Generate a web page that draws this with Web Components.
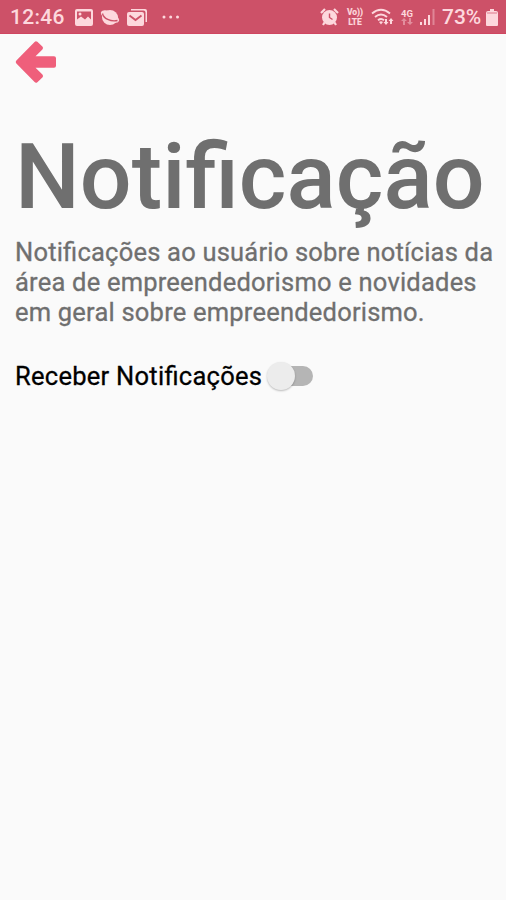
<!DOCTYPE html>
<html lang="pt-BR">
<head>
  <meta charset="utf-8">
  <title>Notificação</title>
  <style>
    body {
      margin: 0;
      background: #fafafa;
      font-family: Roboto, "Liberation Sans", sans-serif;
    }
  </style>
</head>
<body>
  <notification-page></notification-page>

  <script>
    class StatusBar extends HTMLElement {
      constructor() {
        super();
        this.attachShadow({ mode: 'open' });
      }

      connectedCallback() {
        this.render();
      }

      render() {
        this.shadowRoot.innerHTML = `
          <style>
            :host {
              --ink: #fdd8dd;
              --bar: #cd5168;
              display: flex;
              align-items: center;
              box-sizing: border-box;
              height: 34px;
              padding: 1px 8px 0 10px;
              background: var(--bar);
              border-bottom: 1px solid #cf4660;
              color: var(--ink);
              font-size: 21px;
              font-weight: 500;
              line-height: 32px;
            }

            svg {
              display: block;
              flex: none;
              fill: var(--ink);
            }

            .line {
              fill: none;
              stroke: var(--ink);
            }

            .cut {
              fill: none;
              stroke: var(--bar);
            }

            .time {
              width: 65px;
              letter-spacing: 0.3px;
            }

            .left {
              display: flex;
              align-items: center;
              gap: 7px;
              flex: 1;
            }

            .more {
              margin-left: 7px;
            }

            .right {
              display: flex;
              align-items: center;
            }

            .tiny {
              font-size: 9.5px;
              line-height: 9px;
              font-weight: 700;
              text-align: center;
            }

            .volte {
              display: flex;
              flex-direction: column;
              width: 18px;
              margin-left: 7px;
              font-size: 8.5px;
              line-height: 10px;
              -webkit-text-stroke: 0.2px;
            }

            .net {
              width: 16px;
              margin-left: 5px;
            }

            .battery {
              width: 40px;
              margin-left: 7px;
              white-space: nowrap;
            }
          </style>
          <div class="time">12:46</div>
          <div class="left">
            <svg width="18" height="17" viewBox="0 0 18 17">
              <path fill-rule="evenodd" d="M2 0h14q2 0 2 2v13q0 2-2 2H2q-2 0-2-2V2q0-2 2-2zM2 2.5v8l4-3 4 3 3-3 3 3v-8zM5 3.500a1.500 1.500 0 1 1 0 3a1.500 1.500 0 0 1 0-3z"/>
            </svg>
            <svg width="20" height="17" viewBox="0 0 20 17">
              <ellipse cx="10" cy="8.5" rx="8" ry="7.5"/>
              <ellipse cx="10" cy="7.5" rx="10" ry="4.6" transform="rotate(28 10 7.5)"/>
              <path class="cut" d="M2.5 4.500c1 5 8 8.500 15 7" stroke-width="1.3"/>
            </svg>
            <svg width="20" height="17" viewBox="0 0 20 17">
              <path d="M4 0h14q2 0 2 2v11h-1.5V3.5q0-2-2-2H4z"/>
              <path d="M2 3h13q2 0 2 2v10q0 2-2 2H2q-2 0-2-2V5q0-2 2-2z"/>
              <path class="cut" d="M2.5 6.5l6 4.5 6-4.5" stroke-width="1.8"/>
            </svg>
            <svg class="more" width="20" height="4" viewBox="0 0 20 4">
              <circle cx="3" cy="2" r="1.5"/><circle cx="9.7" cy="2" r="1.5"/><circle cx="16.5" cy="2" r="1.5"/>
            </svg>
          </div>
          <div class="right">
            <svg width="19" height="18" viewBox="0 0 19 18">
              <circle cx="9.5" cy="9.5" r="7.5"/>
              <path class="line" d="M1 5l4-4M18 5l-4-4M4.5 14.5L3 17M14.5 14.5L16 17" stroke-width="2.2"/>
              <path class="cut" d="M9.5 5.5v4l3 2" stroke-width="1.4"/>
            </svg>
            <div class="tiny volte"><span>Vo))</span><span>LTE</span></div>
            <svg style="margin-left: 7px" width="23" height="18" viewBox="0 0 23 18">
              <path class="line" d="M1 5.5q9-7.500 18 0M4 9q6-5 12 0M7 12.3q3.2-2.500 6 0" stroke-width="1.9"/>
              <path d="M8 14q2-1.500 4 0l-2 2.500z"/>
              <path d="M14 11h2v3h1.5L15 17l-2.500-3H14zM19 16h2v-3h1.5L20 10l-2.500 3H19z"/>
            </svg>
            <div class="tiny net">4G
              <svg width="16" height="7" viewBox="0 0 16 7" opacity=".45">
                <path d="M4 7V3H2l3-3 3 3H6v4zM10 0h2v4h2l-3 3-3-3h2z"/>
              </svg>
            </div>
            <svg style="margin-left: 5px" width="15" height="16" viewBox="0 0 15 16">
              <path d="M0 13h2v3H0zM4 10h2v6H4zM8 6h2v10H8z"/>
              <path d="M12.5 0h2v16h-2z" opacity=".4"/>
            </svg>
            <div class="battery">73%</div>
            <svg style="margin-left: 4px" width="12" height="17" viewBox="0 0 12 17">
              <path d="M4 0h4v2h2q2 0 2 2v12q0 1-1 1H1q-1 0-1-1V4q0-2 2-2h2z"/>
              <path d="M1 3h10v2H1z" fill="#cd5168" opacity=".35"/>
            </svg>
          </div>
        `;
      }
    }

    class BackButton extends HTMLElement {
      constructor() {
        super();
        this.attachShadow({ mode: 'open' });
      }

      connectedCallback() {
        this.shadowRoot.innerHTML = `
          <style>
            :host {
              display: block;
              width: 42px;
              height: 44px;
            }

            svg {
              display: block;
            }
          </style>
          <svg width="42" height="44" viewBox="0 0 42 44">
            <path d="M2.800 22L21 3.300l5 4.700-10.200 10.200H39v7.600H15.800L26 36l-5 4.700z" fill="#ef5f7b" stroke="#ef5f7b" stroke-width="4" stroke-linejoin="round"/>
          </svg>
        `;
      }
    }

    class ToggleSwitch extends HTMLElement {
      constructor() {
        super();
        this.attachShadow({ mode: 'open' });
      }

      connectedCallback() {
        this.render();
        this.addEventListener('click', this.onTap);
      }

      disconnectedCallback() {
        this.removeEventListener('click', this.onTap);
      }

      onTap() {
        this.toggleAttribute('checked');
      }

      render() {
        this.shadowRoot.innerHTML = `
          <style>
            :host {
              display: flex;
              align-items: center;
              width: 46px;
              height: 30px;
            }

            .track {
              display: flex;
              align-items: center;
              width: 40px;
              height: 20px;
              margin-left: 6px;
              border-radius: 10px;
              background: #b5b5b5;
            }

            .thumb {
              flex: none;
              width: 28px;
              height: 28px;
              margin-left: -6px;
              border-radius: 50%;
              background: #ececec;
              box-shadow: 0 1px 2px rgba(0, 0, 0, 0.25);
            }

            :host([checked]) .thumb {
              margin-left: 18px;
            }
          </style>
          <div class="track"><div class="thumb"></div></div>
        `;
      }
    }

    class NotificationPage extends HTMLElement {
      constructor() {
        super();
        this.attachShadow({ mode: 'open' });
      }

      connectedCallback() {
        this.render();
      }

      render() {
        this.shadowRoot.innerHTML = `
          <style>
            :host {
              display: flex;
              flex-direction: column;
              height: 900px;
              overflow: hidden;
            }

            back-button {
              margin: 6px 0 0 15px;
            }

            h1 {
              margin: 39px 0 0 15px;
              color: #6f6f6f;
              font-size: 91.4px;
              font-weight: 500;
              line-height: 108px;
              white-space: nowrap;
            }

            p {
              margin: 6px 0 0 15px;
              color: #6f6f6f;
              font-size: 25.5px;
              line-height: 30px;
              letter-spacing: 0.21px;
              font-feature-settings: "liga" 1;
              white-space: nowrap;
              -webkit-text-stroke: 0.3px;
            }

            .row {
              display: flex;
              align-items: center;
              margin: 33px 0 0 15px;
              color: #000;
              font-size: 25.5px;
              line-height: 30px;
            }

            .label {
              width: 252px;
              padding-top: 1px;
              white-space: nowrap;
              letter-spacing: 0.27px;
              font-feature-settings: "liga" 1;
              -webkit-text-stroke: 0.3px;
            }
          </style>
          <status-bar></status-bar>
          <back-button></back-button>
          <h1>Notificação</h1>
          <p>Notificações ao usuário sobre notícias da<br>área de empreendedorismo e novidades<br>em geral sobre empreendedorismo.</p>
          <div class="row">
            <div class="label">Receber Notificações</div>
            <toggle-switch></toggle-switch>
          </div>
        `;
      }
    }

    customElements.define('status-bar', StatusBar);
    customElements.define('back-button', BackButton);
    customElements.define('toggle-switch', ToggleSwitch);
    customElements.define('notification-page', NotificationPage);
  </script>
</body>
</html>
